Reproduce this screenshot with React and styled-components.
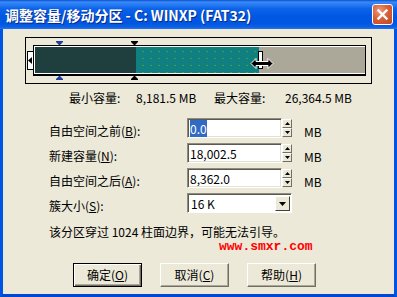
import React from 'react'
import styled, { createGlobalStyle } from 'styled-components'

const GlobalStyle = createGlobalStyle`
    html, body {
        margin: 0;
        padding: 0;
        background: #fff;
    }
    body {
        font-family: "Noto Sans CJK SC", "Liberation Sans", sans-serif;
        font-size: 12px;
        color: #000;
    }
`

const Window = styled.div`
    width: 397px;
    height: 297px;
    display: flex;
    flex-direction: column;
`

const TitleBar = styled.div`
    height: 29px;
    flex: none;
    display: flex;
    align-items: center;
    justify-content: space-between;
    padding: 0 4px 0 5px;
    background: linear-gradient(to bottom, #0a4fd0 0%, #3a8af7 7%, #2b7ff5 14%, #0d63e8 30%, #0058e3 55%, #0056df 80%, #0a5fe6 92%, #2a74ec 100%);
`

const TitleText = styled.div`
    color: #fff;
    font-size: 14px;
    font-weight: 700;
    line-height: 16px;
    white-space: pre;
    text-shadow: 1px 1px 0 #0a2a8a;
`

const CloseButton = styled.div`
    width: 21px;
    height: 21px;
    box-sizing: border-box;
    border: 1px solid #fff;
    border-radius: 3px;
    background: radial-gradient(circle at 35% 30%, #f09a78 0%, #d8603a 45%, #c0461c 100%);
    display: flex;
    align-items: center;
    justify-content: center;
`

const Body = styled.div`
    flex: 1;
    display: flex;
    flex-direction: column;
    background: #ece9d8;
    border-left: 3px solid #0054e3;
    border-right: 3px solid #0054e3;
    border-bottom: 3px solid #0048d0;
    padding-top: 8px;
`

const BarFrame = styled.div`
    position: relative;
    margin-left: 22px;
    width: 347px;
    height: 47px;
    box-sizing: border-box;
    border: 1px solid #000;
    display: flex;
    align-items: flex-start;
    padding: 7px 0 0 1px;
`

const LeftHandle = styled.div`
    width: 6px;
    height: 19px;
    margin-top: 6px;
    box-sizing: border-box;
    border: 1px solid #000;
    border-right: none;
    background: #fff;
    display: flex;
    align-items: center;
`

const Bar = styled.div`
    width: 333px;
    height: 31px;
    box-sizing: border-box;
    border: 1px solid #000;
    border-bottom-width: 2px;
    background: #fff;
    padding: 1px 0 1px 1px;
    display: flex;
`

const Segment = styled.div`
    width: ${(p) => (p.$w ? p.$w + 'px' : 'auto')};
    flex: ${(p) => (p.$w ? 'none' : '1')};
    background-color: ${(p) => p.$color};
    background-image: ${(p) =>
        p.$dots ? 'radial-gradient(circle, #4f9a3a 0.6px, transparent 0.9px)' : 'none'};
    background-size: 8px 7px;
    background-position: 3px 1px;
`

const Marker = styled.svg`
    position: absolute;
    left: ${(p) => p.$x}px;
    top: ${(p) => p.$y}px;
`

const RightHandle = styled.div`
    position: absolute;
    left: 232px;
    top: 13px;
    width: 5px;
    height: 18px;
    box-sizing: border-box;
    border: 1px solid #000;
    background: #fff;
`

const Cursor = styled.svg`
    position: absolute;
    left: 224px;
    top: 20px;
`

const CapRow = styled.div`
    display: flex;
    margin-top: 8px;
    padding-left: 66px;
    line-height: 12px;
    white-space: pre;
`

const CapCell = styled.div`
    width: ${(p) => p.$w}px;
`

const Form = styled.div`
    display: grid;
    grid-template-columns: 138px 105px auto;
    grid-auto-rows: 20px;
    row-gap: 5px;
    margin-top: 14px;
    padding-left: 46px;
`

const Label = styled.div`
    align-self: end;
    line-height: 12px;
    padding-bottom: 1px;
    white-space: pre;
`

const Field = styled.div`
    display: flex;
    height: 20px;
`

const TextBox = styled.div`
    flex: 1;
    box-sizing: border-box;
    border-top: 1px solid #8f8c7f;
    border-left: 1px solid #8f8c7f;
    border-bottom: 1px solid #fff;
    border-right: 1px solid #fff;
    box-shadow: inset 1px 1px 0 #5c5a50, inset -1px -1px 0 #e4e1d2;
    background: #fff;
    padding: 3px 0 0 2px;
    line-height: 13px;
    white-space: pre;
`

const Selected = styled.span`
    background: #316ac5;
    color: #fff;
`

const Spinner = styled.div`
    width: 10px;
    display: flex;
    flex-direction: column;
    padding: 1px 0;
    box-sizing: border-box;
`

const SpinButton = styled.div`
    flex: 1;
    box-sizing: border-box;
    background: #ece9d8;
    border-top: 1px solid #fff;
    border-left: 1px solid #fff;
    border-right: 1px solid #716f64;
    border-bottom: 1px solid #716f64;
    display: flex;
    align-items: center;
    justify-content: center;
`

const Unit = styled.div`
    align-self: end;
    margin-left: 12px;
    line-height: 12px;
`

const Select = styled.div`
    display: flex;
    height: 20px;
    box-sizing: border-box;
    border-top: 1px solid #8f8c7f;
    border-left: 1px solid #8f8c7f;
    border-bottom: 1px solid #fff;
    border-right: 1px solid #fff;
    box-shadow: inset 1px 1px 0 #5c5a50;
    background: #fff;
`

const SelectValue = styled.div`
    flex: 1;
    padding: 3px 0 0 3px;
    line-height: 13px;
    white-space: pre;
`

const SelectArrow = styled.div`
    width: 15px;
    margin: 2px 1px 1px 0;
    box-sizing: border-box;
    background: #ece9d8;
    border-top: 1px solid #fff;
    border-left: 1px solid #fff;
    border-right: 1px solid #404040;
    border-bottom: 1px solid #404040;
    display: flex;
    align-items: center;
    justify-content: center;
`

const Note = styled.div`
    margin-top: 13px;
    padding-left: 46px;
    line-height: 12px;
    white-space: pre;
`

const Watermark = styled.div`
    margin-top: 3px;
    padding-left: 216px;
    font-family: "Liberation Mono", monospace;
    font-weight: 700;
    font-size: 13px;
    line-height: 12px;
    color: #ff0000;
`

const ButtonRow = styled.div`
    display: flex;
    gap: 18px;
    margin-top: 10px;
    padding-left: 70px;
`

const Button = styled.div`
    width: 69px;
    height: 24px;
    box-sizing: border-box;
    display: flex;
    align-items: center;
    justify-content: center;
    background: #ece9d8;
    border-top: 1px solid ${(p) => (p.$default ? '#000' : '#fff')};
    border-left: 1px solid ${(p) => (p.$default ? '#000' : '#fff')};
    border-right: 1px solid ${(p) => (p.$default ? '#000' : '#716f64')};
    border-bottom: 1px solid ${(p) => (p.$default ? '#000' : '#716f64')};
    box-shadow: ${(p) =>
        p.$default
            ? 'inset 1px 1px 0 #fff, inset -1px -1px 0 #716f64, inset -2px -2px 0 #aca899'
            : 'inset -1px -1px 0 #aca899'};
    line-height: 12px;
    white-space: pre;
`

const TopMarker = ({ x, color }) => (
    <Marker $x={x} $y={3} width="7" height="4" viewBox="0 0 7 4">
        <polygon points="0,0 7,0 7,1 4,4 3,4 0,1" fill={color} />
    </Marker>
)

const BottomMarker = ({ x, color }) => (
    <Marker $x={x} $y={38} width="7" height="4" viewBox="0 0 7 4">
        <polygon points="3,0 4,0 7,3 7,4 0,4 0,3" fill={color} />
    </Marker>
)

const UpArrow = () => (
    <svg width="5" height="3" viewBox="0 0 5 3">
        <polygon points="2.5,0 5,3 0,3" fill="#000" />
    </svg>
)

const DownArrow = ({ w = 5, h = 3 }) => (
    <svg width={w} height={h} viewBox={`0 0 ${w} ${h}`}>
        <polygon points={`0,0 ${w},0 ${w / 2},${h}`} fill="#000" />
    </svg>
)

const SpinField = ({ children }) => (
    <Field>
        <TextBox>{children}</TextBox>
        <Spinner>
            <SpinButton>
                <UpArrow />
            </SpinButton>
            <SpinButton>
                <DownArrow />
            </SpinButton>
        </Spinner>
    </Field>
)

const App = () => {
    return (
        <React.Fragment>
            <GlobalStyle />
            <Window>
                <TitleBar>
                    <TitleText>调整容量/移动分区 - C: WINXP (FAT32)</TitleText>
                    <CloseButton>
                        <svg width="11" height="11" viewBox="0 0 11 11">
                            <path d="M1.5 1.5 L9.5 9.5 M9.5 1.5 L1.5 9.5" stroke="#fff" strokeWidth="2.4" strokeLinecap="square" />
                        </svg>
                    </CloseButton>
                </TitleBar>
                <Body>
                    <BarFrame>
                        <LeftHandle>
                            <svg width="4" height="7" viewBox="0 0 4 7">
                                <polygon points="0,3.5 4,0 4,7" fill="#000" />
                            </svg>
                        </LeftHandle>
                        <Bar>
                            <Segment $w={101} $color="#1f3f3f" />
                            <Segment $w={123} $color="#0f7f80" $dots />
                            <Segment $color="#aca899" />
                        </Bar>
                        <TopMarker x={30} color="#1f3f9f" />
                        <BottomMarker x={30} color="#1f3f9f" />
                        <TopMarker x={105} color="#000" />
                        <BottomMarker x={105} color="#000" />
                        <RightHandle />
                        <Cursor width="24" height="11" viewBox="0 0 24 11">
                            <path
                                d="M1 5.5 L6 0.5 L6 3.5 L18 3.5 L18 0.5 L23 5.5 L18 10.5 L18 7.5 L6 7.5 L6 10.5 Z"
                                fill="#000"
                                stroke="#fff"
                                strokeWidth="1"
                            />
                        </Cursor>
                    </BarFrame>

                    <CapRow>
                        <CapCell $w={67}>最小容量:</CapCell>
                        <CapCell $w={78}>8,181.5 MB</CapCell>
                        <CapCell $w={71}>最大容量:</CapCell>
                        <CapCell $w={80}>26,364.5 MB</CapCell>
                    </CapRow>

                    <Form>
                        <Label>
                            自由空间之前(<u>B</u>):
                        </Label>
                        <SpinField>
                            <Selected>0.0</Selected>
                        </SpinField>
                        <Unit>MB</Unit>

                        <Label>
                            新建容量(<u>N</u>):
                        </Label>
                        <SpinField>18,002.5</SpinField>
                        <Unit>MB</Unit>

                        <Label>
                            自由空间之后(<u>A</u>):
                        </Label>
                        <SpinField>8,362.0</SpinField>
                        <Unit>MB</Unit>

                        <Label>
                            簇大小(<u>S</u>):
                        </Label>
                        <Select>
                            <SelectValue>16 K</SelectValue>
                            <SelectArrow>
                                <DownArrow w={7} h={4} />
                            </SelectArrow>
                        </Select>
                        <div />
                    </Form>

                    <Note>该分区穿过 1024 柱面边界，可能无法引导。</Note>
                    <Watermark>www.smxr.com</Watermark>

                    <ButtonRow>
                        <Button $default>
                            确定(<u>O</u>)
                        </Button>
                        <Button>
                            取消(<u>C</u>)
                        </Button>
                        <Button>
                            帮助(<u>H</u>)
                        </Button>
                    </ButtonRow>
                </Body>
            </Window>
        </React.Fragment>
    )
}

export default App
